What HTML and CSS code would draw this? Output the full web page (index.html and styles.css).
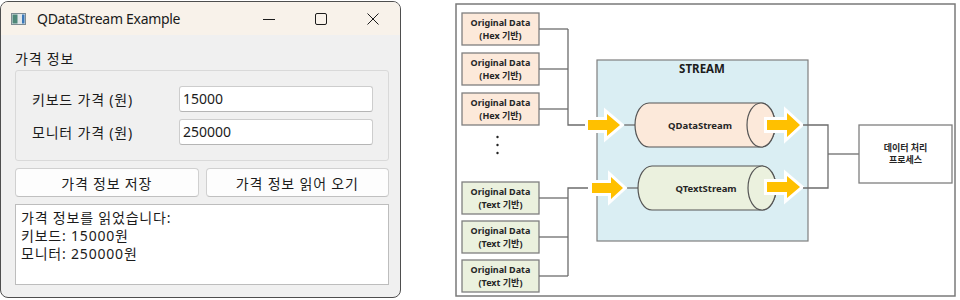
FILE: index.html
```html
<!DOCTYPE html>
<html lang="ko">
<head>
    <meta charset="UTF-8">
    <meta name="viewport" content="width=device-width, initial-scale=1.0">
    <title>QDataStream Example</title>
    <link rel="stylesheet" href="styles.css">
</head>
<body>
    <div class="page">
        <div class="window">
            <div class="titlebar">
                <svg class="app-icon" width="15" height="12" viewBox="0 0 15 12">
                    <rect x="0.5" y="0.5" width="14" height="11" class="icon-frame"/>
                    <rect x="1.5" y="1.5" width="5" height="9" class="icon-left"/>
                    <rect x="11" y="1.5" width="2.5" height="9" class="icon-right"/>
                </svg>
                <span class="title">QDataStream Example</span>
                <div class="controls">
                    <svg class="ctl" width="12" height="12" viewBox="0 0 12 12"><line x1="0" y1="6.5" x2="12" y2="6.5"/></svg>
                    <svg class="ctl" width="12" height="12" viewBox="0 0 12 12"><rect x="0.5" y="0.5" width="11" height="11" rx="1.5"/></svg>
                    <svg class="ctl" width="12" height="12" viewBox="0 0 12 12"><line x1="0.5" y1="0.5" x2="11.5" y2="11.5"/><line x1="11.5" y1="0.5" x2="0.5" y2="11.5"/></svg>
                </div>
            </div>
            <div class="client">
                <div class="group-title">가격 정보</div>
                <div class="group">
                    <label class="field-label">키보드 가격 (원)</label>
                    <div class="field">15000</div>
                    <label class="field-label">모니터 가격 (원)</label>
                    <div class="field">250000</div>
                </div>
                <div class="buttons">
                    <button class="push">가격 정보 저장</button>
                    <button class="push">가격 정보 읽어 오기</button>
                </div>
                <div class="output">
                    <div class="out-line">가격 정보를 읽었습니다:</div>
                    <div class="out-line">키보드: 15000원</div>
                    <div class="out-line">모니터: 250000원</div>
                </div>
            </div>
        </div>

        <svg class="diagram" width="520" height="300" viewBox="440 0 520 300">
            <rect class="frame" x="456" y="4" width="499" height="292"/>

            <!-- 입력 데이터 -->
            <rect class="box hex" x="462" y="13" width="77" height="32"/>
            <text class="lbl" x="500.5" y="26">Original Data</text>
            <text class="lbl" x="500.5" y="38.5">(Hex 기반)</text>
            <rect class="box hex" x="462" y="53" width="77" height="32"/>
            <text class="lbl" x="500.5" y="66">Original Data</text>
            <text class="lbl" x="500.5" y="78.5">(Hex 기반)</text>
            <rect class="box hex" x="462" y="93" width="77" height="32"/>
            <text class="lbl" x="500.5" y="106">Original Data</text>
            <text class="lbl" x="500.5" y="118.5">(Hex 기반)</text>

            <circle class="dot" cx="497.5" cy="137" r="1.2"/>
            <circle class="dot" cx="497.5" cy="145" r="1.2"/>
            <circle class="dot" cx="497.5" cy="153" r="1.2"/>

            <rect class="box txt" x="462" y="182" width="77" height="32"/>
            <text class="lbl" x="500.5" y="195">Original Data</text>
            <text class="lbl" x="500.5" y="207.5">(Text 기반)</text>
            <rect class="box txt" x="462" y="221" width="77" height="32"/>
            <text class="lbl" x="500.5" y="234">Original Data</text>
            <text class="lbl" x="500.5" y="246.5">(Text 기반)</text>
            <rect class="box txt" x="462" y="260" width="77" height="32"/>
            <text class="lbl" x="500.5" y="273">Original Data</text>
            <text class="lbl" x="500.5" y="285.5">(Text 기반)</text>

            <!-- 연결선 -->
            <polyline class="wire" points="539,29 568,29"/>
            <polyline class="wire" points="539,69 568,69"/>
            <polyline class="wire" points="539,109 568,109"/>
            <polyline class="wire" points="568,29 568,125 586,125"/>
            <polyline class="wire" points="539,198 568,198"/>
            <polyline class="wire" points="539,237 568,237"/>
            <polyline class="wire" points="539,276 568,276"/>
            <polyline class="wire" points="568,276 568,188 588,188"/>

            <!-- STREAM -->
            <rect class="stream" x="597" y="60" width="211" height="181"/>
            <text class="stream-title" x="702" y="73">STREAM</text>

            <polyline class="wire" points="624,125 635,125"/>
            <polyline class="wire" points="627,188 638,188"/>

            <path class="cyl hex" d="M649,103 H761 A14,22 0 0 1 761,147 H649 A14,22 0 0 1 649,103 Z"/>
            <ellipse class="cyl hex" cx="761" cy="125" rx="14" ry="22"/>
            <text class="lbl big" x="700" y="128.5">QDataStream</text>

            <path class="cyl txt" d="M652,166 H762 A14,22 0 0 1 762,210 H652 A14,22 0 0 1 652,166 Z"/>
            <ellipse class="cyl txt" cx="762" cy="188" rx="14" ry="22"/>
            <text class="lbl big" x="706" y="191.5">QTextStream</text>

            <!-- 화살표 -->
            <polygon class="arrow" points="588,120 607,120 607,114 620,125 607,136 607,130 588,130"/>
            <polygon class="arrow" points="592,183 611,183 611,177 623,188 611,199 611,193 592,193"/>
            <polygon class="arrow" points="767,120 787,120 787,113 800,125 787,137 787,130 767,130"/>
            <polygon class="arrow" points="767,182 787,182 787,176 800,187 787,198 787,192 767,192"/>

            <polyline class="wire" points="803,125 828,125 828,188 803,188"/>
            <polyline class="wire" points="828,154 859,154"/>

            <rect class="box plain" x="859" y="125" width="93" height="58"/>
            <text class="lbl" x="905.5" y="150.5">데이터 처리</text>
            <text class="lbl" x="905.5" y="163">프로세스</text>
        </svg>
    </div>
</body>
</html>
```

FILE: styles.css
```css
body {
    margin: 0;
    padding: 0;
    background: #ffffff;
    font-family: "Noto Sans", "Noto Sans CJK KR", sans-serif;
    color: #1b1b1b;
}
.page {
    display: flex;
    align-items: flex-start;
    width: 960px;
    height: 300px;
    overflow: hidden;
}
.window {
    box-sizing: border-box;
    width: 401px;
    height: 297px;
    margin-top: 1px;
    border: 1px solid #4e4e4e;
    border-radius: 8px;
    background: #f0f0f0;
    overflow: hidden;
    flex-shrink: 0;
}
.titlebar {
    height: 33px;
    display: flex;
    align-items: center;
    background: #f8f2ea;
    padding-left: 10px;
}
.app-icon {
    margin-right: 11px;
}
.icon-frame {
    fill: #dfe5e8;
    stroke: #7d8b92;
}
.icon-left {
    fill: #4d8778;
}
.icon-right {
    fill: #3b78b8;
}
.title {
    font-size: 14px;
    letter-spacing: -0.3px;
    color: #1a1a1a;
    flex: 1;
}
.controls {
    display: flex;
    gap: 40px;
    margin-right: 21px;
    margin-top: 1px;
}
.ctl {
    fill: none;
    stroke: #1c1c1c;
    stroke-width: 1;
}
.client {
    padding: 14px 11px 0 14px;
    letter-spacing: 0.8px;
}
.group-title {
    font-size: 14px;
    line-height: 20px;
    margin-bottom: 1px;
}
.group {
    display: grid;
    grid-template-columns: 147px 1fr;
    row-gap: 7px;
    align-items: center;
    border: 1px solid #d9d9d9;
    border-radius: 3px;
    padding: 15px 15px 15px 16px;
}
.field-label {
    font-size: 14px;
}
.field {
    box-sizing: border-box;
    height: 26px;
    line-height: 24px;
    padding-left: 3px;
    font-size: 14px;
    letter-spacing: 0;
    background: #ffffff;
    border: 1px solid #cdcdcd;
    border-bottom-color: #b5b5b5;
    border-radius: 3px;
}
.buttons {
    display: grid;
    grid-template-columns: 1fr 1fr;
    gap: 7px;
    margin-top: 7px;
}
.push {
    height: 29px;
    padding: 0;
    font-family: inherit;
    font-size: 14px;
    letter-spacing: 0.8px;
    color: #1b1b1b;
    background: #fdfdfd;
    border: 1px solid #d0d0d0;
    border-bottom-color: #c0c0c0;
    border-radius: 4px;
}
.output {
    box-sizing: border-box;
    height: 81px;
    margin-top: 7px;
    padding: 4px 5px;
    font-size: 14px;
    background: #ffffff;
    border: 1px solid #bdbdbd;
}
.out-line {
    height: 18px;
    line-height: 18px;
}
.diagram {
    flex-shrink: 0;
    margin-left: 39px;
    display: block;
}
.frame {
    fill: #ffffff;
    stroke: #7a7a7a;
    stroke-width: 1.5;
}
.box {
    stroke: #7f7f7f;
    stroke-width: 1.3;
}
.hex {
    fill: #fce9da;
}
.txt {
    fill: #ebf1de;
}
.plain {
    fill: #ffffff;
}
.lbl {
    font-family: "Noto Sans", "Noto Sans CJK KR", sans-serif;
    font-size: 9px;
    font-weight: bold;
    fill: #262626;
    text-anchor: middle;
}
.lbl.big {
    font-size: 9.5px;
}
.dot {
    fill: #222222;
}
.wire {
    fill: none;
    stroke: #6c6c6c;
    stroke-width: 1.3;
}
.stream {
    fill: #daeef3;
    stroke: #7f7f7f;
    stroke-width: 1.2;
}
.stream-title {
    font-family: "Noto Sans", sans-serif;
    font-size: 11.5px;
    font-weight: bold;
    fill: #1c1c1c;
    text-anchor: middle;
}
.cyl {
    stroke: #555555;
    stroke-width: 1.2;
}
.arrow {
    fill: #ffc000;
    stroke: #ffffff;
    stroke-width: 6;
    stroke-linejoin: miter;
    paint-order: stroke;
}
```
